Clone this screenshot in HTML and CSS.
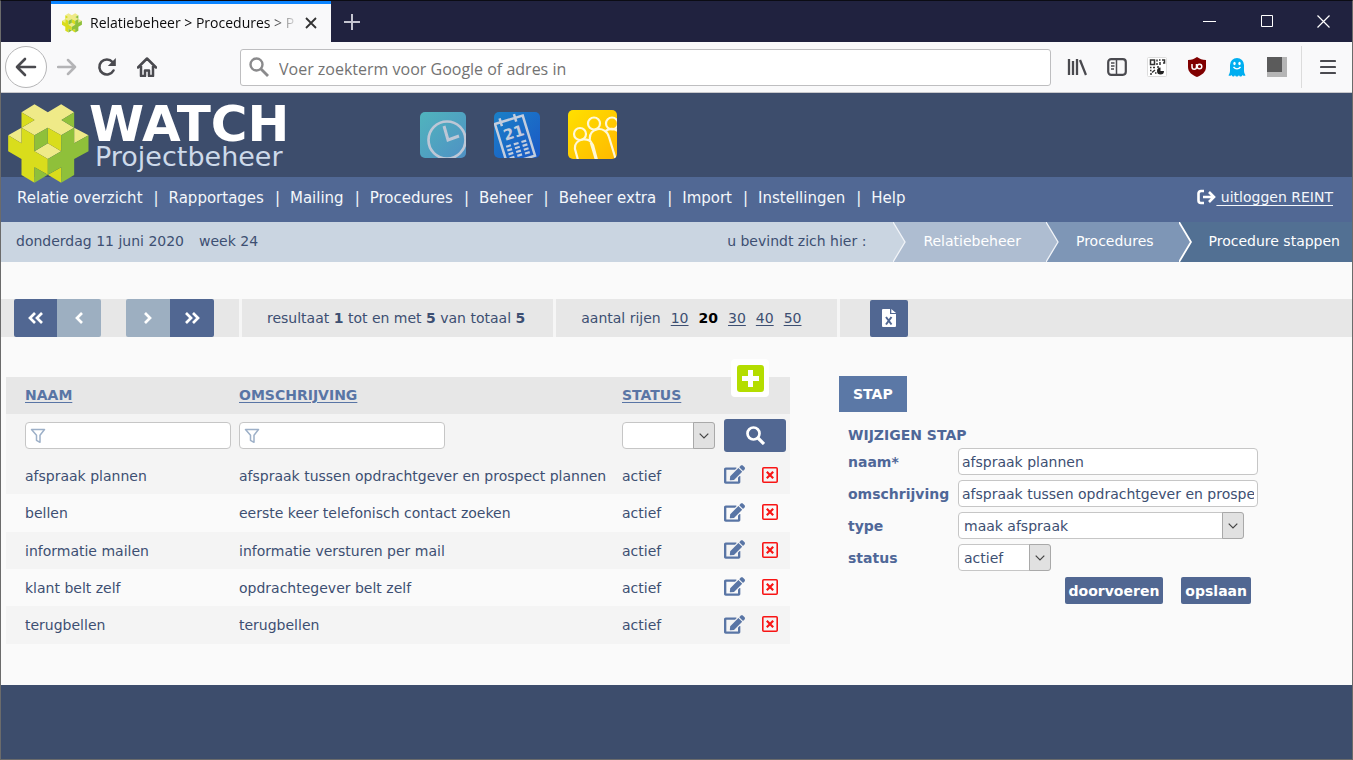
FILE: index.html
```html
<!DOCTYPE html>
<html lang="nl">
<head>
<meta charset="utf-8">
<title>Relatiebeheer &gt; Procedures &gt; Procedure stappen</title>
<link rel="stylesheet" href="styles.css">
</head>
<body>
<svg class="defs" aria-hidden="true">
  <symbol id="edit" viewBox="0 0 576 512"><path d="M402.6 83.2l90.2 90.2c3.8 3.8 3.8 10 0 13.8L274.4 405.6l-92.8 10.3c-12.4 1.4-22.9-9.1-21.5-21.5l10.3-92.8L388.8 83.2c3.8-3.8 10-3.8 13.8 0zm162-22.9l-48.8-48.8c-15.2-15.2-39.9-15.2-55.2 0l-35.4 35.4c-3.8 3.8-3.8 10 0 13.8l90.2 90.2c3.8 3.8 10 3.8 13.8 0l35.4-35.4c15.2-15.3 15.2-40 0-55.2zM384 346.2V448H64V128h229.8c3.2 0 6.2-1.3 8.5-3.5l40-40c7.6-7.6 2.2-20.5-8.5-20.5H48C21.5 64 0 85.5 0 112v352c0 26.5 21.5 48 48 48h352c26.5 0 48-21.5 48-48V306.2c0-10.7-12.9-16-20.5-8.5l-40 40c-2.2 2.3-3.5 5.3-3.5 8.5z" fill="#5975a5"/></symbol>
  <symbol id="remove" viewBox="0 0 16 16"><rect x=".8" y=".8" width="14.400" height="14.400" rx="1" fill="none" stroke="#f81515" stroke-width="1.600"/><path d="M4.800 4.800l6.400 6.400M11.200 4.800l-6.400 6.400" stroke="#f81515" stroke-width="2.200"/></symbol>
  <symbol id="funnel" viewBox="0 0 16 16"><path d="M1.5 1.5h13L10 7.3v7L6.500 12.300v-5z" fill="none" stroke="#9db0c8" stroke-width="1.500" stroke-linejoin="round"/></symbol>
  <symbol id="down" viewBox="0 0 10 6"><path d="M.7.7L5 5 9.300.7" fill="none" stroke="#444" stroke-width="1.200"/></symbol>
  <symbol id="logo" viewBox="24 32 242 240">
    <path d="M64 57l39-24 40 24 40-24 39 24-38 23 38 23-39 23-40-23-40 23-39-23 39-23zM24 126l40-23v47zM265 126l-43-23v47zM103 174l40-24 40 24-40 23z" fill="#efea88"/>
    <path d="M64 57l39 23-39 23zM24 126l40 24v-47l39 23v48l40 23v47l-40-22v46l-39-23v-48l-40-23zM143 103l40 23v48l-40-24zM143 244l40-22v46z" fill="#d9dd1c"/>
    <path d="M222 57l-38 23 38 23zM265 126l-43 24v-47l-39 23v48l-40 23v47l40-22v46l39-23v-48l43-23zM143 103l-40 23v48l40-24zM143 244l-40-22v46z" fill="#8fc03a"/>
  </symbol>
</svg>

<div class="tabs">
  <div class="tab">
    <svg width="20" height="20"><use href="#logo"/></svg>
    <span class="tab-title">Relatiebeheer &gt; Procedures &gt; P</span>
    <button class="plain" aria-label="Tabblad sluiten"><svg width="12" height="12" viewBox="0 0 12 12"><path d="M1 1l10 10M11 1L1 11" stroke="#333" stroke-width="1.800"/></svg></button>
  </div>
  <button class="plain new-tab" aria-label="Nieuw tabblad"><svg width="18" height="18" viewBox="0 0 18 18"><path d="M9 1v16M1 9h16" stroke="#c5c5d0" stroke-width="2"/></svg></button>
  <div class="window-buttons">
    <button class="plain" aria-label="Minimaliseren"><svg width="13" height="13" viewBox="0 0 13 13"><path d="M0 6.500h13" stroke="#fff"/></svg></button>
    <button class="plain" aria-label="Maximaliseren"><svg width="13" height="13" viewBox="0 0 13 13"><path d="M1.500.5h11v11h-11z" fill="none" stroke="#fff"/></svg></button>
    <button class="plain" aria-label="Sluiten"><svg width="13" height="13" viewBox="0 0 13 13"><path d="M.5.5l12 12M12.500.5l-12 12" stroke="#fff" stroke-width="1.200"/></svg></button>
  </div>
</div>

<div class="toolbar">
  <div class="nav-buttons">
    <button class="plain back" aria-label="Vorige"><svg width="22" height="20" viewBox="0 0 22 20"><path d="M20 10H2M10 2L2 10l8 8" fill="none" stroke="#4a4a4f" stroke-width="2.600" stroke-linecap="round" stroke-linejoin="round"/></svg></button>
    <button class="plain" aria-label="Volgende"><svg width="20" height="18" viewBox="0 0 20 18"><path d="M1 9h17M11 2l7 7-7 7" fill="none" stroke="#b4b4b6" stroke-width="2.500" stroke-linecap="round" stroke-linejoin="round"/></svg></button>
    <button class="plain" aria-label="Vernieuwen"><svg width="20" height="20" viewBox="0 0 20 20"><path d="M16.500 13.500A7.500 7.500 0 1 1 15.500 5" fill="none" stroke="#4a4a4f" stroke-width="2.600" stroke-linecap="round"/><path d="M18.800 1v8h-8z" fill="#4a4a4f"/></svg></button>
    <button class="plain" aria-label="Startpagina"><svg width="20" height="20" viewBox="0 0 20 20"><path d="M1 10.500L10 1.500l9 9M4 9v10h4v-5.500h4V19h4V9" fill="none" stroke="#4a4a4f" stroke-width="2.500" stroke-linecap="round" stroke-linejoin="round"/></svg></button>
  </div>
  <div class="address">
    <svg width="20" height="20" viewBox="0 0 20 20"><circle cx="7.500" cy="7.500" r="6" fill="none" stroke="#8a8a8c" stroke-width="2.400"/><path d="M12 12l7 7" stroke="#8a8a8c" stroke-width="2.800"/></svg>
    <input type="text" aria-label="Adres" placeholder="Voer zoekterm voor Google of adres in">
  </div>
  <div class="extensions">
    <button class="plain" aria-label="Bibliotheek"><svg width="20" height="18" viewBox="0 0 20 18"><path d="M2 1v16M6 3v14M10 1v16M13 2l6 15" stroke="#4a4a4f" stroke-width="2.300" fill="none"/></svg></button>
    <button class="plain" aria-label="Zijbalk"><svg width="20" height="18" viewBox="0 0 20 18"><rect x="1.200" y="1.200" width="17.600" height="15.600" rx="3" fill="none" stroke="#4a4a4f" stroke-width="2.200"/><path d="M9.500 1v16M4 5h3.500M4 8h3.500M4 11h3" stroke="#4a4a4f" stroke-width="1.500"/></svg></button>
    <button class="plain" aria-label="QR-code"><svg width="20" height="20" viewBox="0 0 20 20"><rect x=".5" y=".5" width="19" height="19" rx="1" fill="#fff" stroke="#ddd"/><path d="M3.500 3h4v4.500h-4zM10 2.500v2M10 6v2M12 3h1.500M13 5v3M15 3h2.500v3H16M3 10.500h1.500M6 10.500h2M10 10h2M3 13.500h1.500M3 17h2M5 15.500l3-2.500M8 16h1.500" fill="none" stroke="#333" stroke-width="1.500"/><path d="M13.500 10.500v3.500H17a3.500 3.500 0 1 1-3.500-3.500z" fill="#222"/></svg></button>
    <button class="plain" aria-label="uBlock Origin"><svg width="20" height="20" viewBox="0 0 20 20"><path d="M10 0c3 2 5 3 9 3v7c0 5-4 8-9 10-5-2-9-5-9-10V3c4 0 6-1 9-3z" fill="#800000"/><path d="M5 7v3a2.200 2.200 0 0 0 4.500 0V7" fill="none" stroke="#fff" stroke-width="1.500"/><circle cx="12.500" cy="9.500" r="2.300" fill="none" stroke="#fff" stroke-width="1.500"/></svg></button>
    <button class="plain" aria-label="Ghostery"><svg width="20" height="20" viewBox="0 0 20 20"><path d="M3 8a7 7 0 0 1 14 0v6c0 2 1 3 1.500 4.500-1 .5-2 .5-3-.5-1 2-3 2-3.500 0-1 2-3.500 2-4 0-1 2-2.500 2-3.500 0-1 1-2 1-3 .5C2 17 3 16 3 14z" fill="#00aef0"/><ellipse cx="7.500" cy="6.500" rx="1.200" ry="1.700" fill="#fff"/><ellipse cx="12.500" cy="6.500" rx="1.200" ry="1.700" fill="#fff"/><path d="M6.500 10c2 2.500 5 2.500 7 0" fill="none" stroke="#fff" stroke-width="1.400"/></svg></button>
    <button class="plain" aria-label="Extensie"><svg width="20" height="20" viewBox="0 0 20 20"><path d="M0 0h20v20H0z" fill="#b5b5b5"/><path d="M0 0h15v15H0z" fill="#5b5b5b"/></svg></button>
    <button class="plain menu" aria-label="Menu"><svg width="16" height="16" viewBox="0 0 16 16"><path d="M1 2h14M1 8h14M1 14h14" stroke="#4a4a4f" stroke-width="2.200" stroke-linecap="round"/></svg></button>
  </div>
</div>

<header class="banner">
  <svg class="logo" width="81" height="80"><use href="#logo"/></svg>
  <div class="brand"><strong>WATCH</strong><span>Projectbeheer</span></div>
  <div class="apps">
    <a href="#" aria-label="Tijd"><svg width="46" height="46" viewBox="0 0 46 46"><defs><linearGradient id="g1" x2="1" y2="1"><stop stop-color="#50b4bd"/><stop offset="1" stop-color="#4f91c4"/></linearGradient><clipPath id="c1"><rect width="46" height="46" rx="5"/></clipPath></defs><g clip-path="url(#c1)"><path d="M0 0h46v46H0z" fill="url(#g1)"/><g fill="none" stroke="#bdc7d6" stroke-width="2.700"><circle cx="27" cy="28" r="18.500"/><path d="M24 14l4 14 11-4" stroke-width="3"/></g></g></svg></a>
    <a href="#" aria-label="Agenda"><svg width="46" height="46" viewBox="0 0 46 46"><defs><linearGradient id="g2" x2="1" y2="1"><stop stop-color="#1a80c8"/><stop offset="1" stop-color="#1b58c5"/></linearGradient></defs><g clip-path="url(#c1)"><path d="M0 0h46v46H0z" fill="url(#g2)"/><g transform="translate(1 12) rotate(-17)" fill="none" stroke="#c3cddd" stroke-width="2.500"><path d="M0 0h29v42H0zM6-4v8M21-4v8"/><path d="M4 25h5m3 0h5m3 0h5M4 29h5m3 0h5m3 0h5M4 33h5m3 0h5m3 0h5M4 37h5m3 0h5m3 0h5" stroke-width="2.200"/><text x="5" y="19" class="day">21</text></g></g></svg></a>
    <a href="#" aria-label="Relaties"><svg width="49" height="49" viewBox="0 0 49 49"><defs><linearGradient id="g3" x2="1" y2="1"><stop stop-color="#ffe000"/><stop offset="1" stop-color="#ffb900"/></linearGradient><clipPath id="c3"><rect width="49" height="49" rx="5"/></clipPath></defs><g clip-path="url(#c3)"><path d="M0 0h49v49H0z" fill="url(#g3)"/><g fill="none" stroke="#fff8d8" stroke-width="2.200"><circle cx="12" cy="24" r="6"/><circle cx="26" cy="13.500" r="6"/><circle cx="44" cy="13.500" r="6"/><path d="M10 50L7 39c-1-11 15-13 18-4l4 15M28 50l-6-20c-2-13 16-15 19-3l7 23M37 22c3-4 9-4 13-1"/></g></g></svg></a>
  </div>
</header>

<nav class="main-nav">
  <ul>
    <li><a href="#">Relatie overzicht</a></li>
    <li><a href="#">Rapportages</a></li>
    <li><a href="#">Mailing</a></li>
    <li><a href="#">Procedures</a></li>
    <li><a href="#">Beheer</a></li>
    <li><a href="#">Beheer extra</a></li>
    <li><a href="#">Import</a></li>
    <li><a href="#">Instellingen</a></li>
    <li><a href="#">Help</a></li>
  </ul>
  <a class="logout" href="#"><svg width="19" height="16" viewBox="0 0 19 16"><path d="M7 2H4a2.500 2.500 0 0 0-2.500 2.500v7A2.500 2.500 0 0 0 4 14h3M6 8h11M12 3l5 5-5 5" fill="none" stroke="#fff" stroke-width="2.600"/></svg><span>&nbsp;uitloggen REINT</span></a>
</nav>

<div class="location">
  <span>donderdag 11 juni 2020</span><span>week 24</span>
  <span class="here">u bevindt zich hier :</span>
  <a class="crumb one" href="#"><svg width="13" height="40" viewBox="0 0 13 40"><path d="M0 0l12 20L0 40z" fill="#cad5e1"/><path d="M0 0l12 20L0 40" fill="none" stroke="#f1f4f8" stroke-width="1.300"/></svg>Relatiebeheer</a>
  <a class="crumb two" href="#"><svg width="13" height="40" viewBox="0 0 13 40"><path d="M0 0l12 20L0 40z" fill="#aebdd1"/><path d="M0 0l12 20L0 40" fill="none" stroke="#f1f4f8" stroke-width="1.300"/></svg>Procedures</a>
  <a class="crumb three" href="#"><svg width="13" height="40" viewBox="0 0 13 40"><path d="M0 0l12 20L0 40z" fill="#7e96b6"/><path d="M0 0l12 20L0 40" fill="none" stroke="#fff" stroke-width="1.800"/></svg>Procedure stappen</a>
</div>

<main>
  <div class="pager">
    <div class="segment steps">
      <button class="step first" aria-label="Eerste"><svg width="16" height="12" viewBox="0 0 16 12"><path d="M7 1L2 6l5 5M14 1L9 6l5 5"/></svg></button>
      <button class="step previous" disabled aria-label="Vorige pagina"><svg width="16" height="12" viewBox="0 0 16 12"><path d="M11 1L6 6l5 5"/></svg></button>
      <button class="step next" disabled aria-label="Volgende pagina"><svg width="16" height="12" viewBox="0 0 16 12"><path d="M5 1l5 5-5 5"/></svg></button>
      <button class="step last" aria-label="Laatste"><svg width="16" height="12" viewBox="0 0 16 12"><path d="M2 1l5 5-5 5M9 1l5 5-5 5"/></svg></button>
    </div>
    <div class="segment result"><p>resultaat <b>1</b> tot en met <b>5</b> van totaal <b>5</b></p></div>
    <div class="segment rows"><span>aantal rijen</span><a href="#">10</a><b class="current">20</b><a href="#">30</a><a href="#">40</a><a href="#">50</a></div>
    <div class="segment export"><button class="excel" aria-label="Exporteren naar Excel"><svg width="14" height="18" viewBox="0 0 14 18"><path d="M1 0h7v5h6v12a1 1 0 0 1-1 1H1a1 1 0 0 1-1-1V1a1 1 0 0 1 1-1zM9.300 0L14 4H9.300z" fill="#fff"/><path d="M4 8l5.500 7.500M9.500 8L4 15.500" stroke="#516792" stroke-width="2"/></svg></button></div>
  </div>

  <div class="columns">
    <section class="list">
      <button class="add" aria-label="Toevoegen"><svg width="27" height="27" viewBox="0 0 27 27"><rect width="27" height="27" rx="3" fill="#b4dd00"/><path d="M13.500 5v17M5 13.500h17" stroke="#fff" stroke-width="5"/></svg></button>
      <table>
        <colgroup><col class="c-name"><col class="c-text"><col class="c-status"><col class="c-tools"></colgroup>
        <thead>
          <tr><th><a href="#">NAAM</a></th><th><a href="#">OMSCHRIJVING</a></th><th><a href="#">STATUS</a></th><th></th></tr>
        </thead>
        <tbody>
          <tr class="filters">
            <td><div class="filter"><svg width="16" height="16"><use href="#funnel"/></svg><input type="text" aria-label="Filter naam"></div></td>
            <td><div class="filter"><svg width="16" height="16"><use href="#funnel"/></svg><input type="text" aria-label="Filter omschrijving"></div></td>
            <td><div class="select small"><select aria-label="Filter status"><option></option><option>actief</option></select><span><svg width="10" height="6"><use href="#down"/></svg></span></div></td>
            <td><button class="search" aria-label="Zoeken"><svg width="19" height="19" viewBox="0 0 19 19"><circle cx="7.500" cy="7.500" r="6" fill="none" stroke="#fff" stroke-width="2.700"/><path d="M12 12l6 6" stroke="#fff" stroke-width="3.200"/></svg></button></td>
          </tr>
          <tr><td>afspraak plannen</td><td>afspraak tussen opdrachtgever en prospect plannen</td><td>actief</td><td><div class="tools"><button class="plain" aria-label="Wijzigen"><svg width="21" height="19"><use href="#edit"/></svg></button><button class="plain" aria-label="Verwijderen"><svg width="16" height="16"><use href="#remove"/></svg></button></div></td></tr>
          <tr><td>bellen</td><td>eerste keer telefonisch contact zoeken</td><td>actief</td><td><div class="tools"><button class="plain" aria-label="Wijzigen"><svg width="21" height="19"><use href="#edit"/></svg></button><button class="plain" aria-label="Verwijderen"><svg width="16" height="16"><use href="#remove"/></svg></button></div></td></tr>
          <tr><td>informatie mailen</td><td>informatie versturen per mail</td><td>actief</td><td><div class="tools"><button class="plain" aria-label="Wijzigen"><svg width="21" height="19"><use href="#edit"/></svg></button><button class="plain" aria-label="Verwijderen"><svg width="16" height="16"><use href="#remove"/></svg></button></div></td></tr>
          <tr><td>klant belt zelf</td><td>opdrachtegever belt zelf</td><td>actief</td><td><div class="tools"><button class="plain" aria-label="Wijzigen"><svg width="21" height="19"><use href="#edit"/></svg></button><button class="plain" aria-label="Verwijderen"><svg width="16" height="16"><use href="#remove"/></svg></button></div></td></tr>
          <tr><td>terugbellen</td><td>terugbellen</td><td>actief</td><td><div class="tools"><button class="plain" aria-label="Wijzigen"><svg width="21" height="19"><use href="#edit"/></svg></button><button class="plain" aria-label="Verwijderen"><svg width="16" height="16"><use href="#remove"/></svg></button></div></td></tr>
        </tbody>
      </table>
    </section>

    <section class="detail">
      <button class="step-tab">STAP</button>
      <form>
        <h2>WIJZIGEN STAP</h2>
        <div class="fields">
          <label for="naam">naam*</label><input id="naam" type="text" value="afspraak plannen">
          <label for="omschrijving">omschrijving</label><input id="omschrijving" type="text" value="afspraak tussen opdrachtgever en prospect plannen">
          <label for="type">type</label><div class="select wide"><select id="type"><option>maak afspraak</option></select><span><svg width="10" height="6"><use href="#down"/></svg></span></div>
          <label for="status">status</label><div class="select small"><select id="status"><option>actief</option></select><span><svg width="10" height="6"><use href="#down"/></svg></span></div>
        </div>
        <div class="actions"><button type="button">doorvoeren</button><button type="button">opslaan</button></div>
      </form>
    </section>
  </div>
</main>
<footer></footer>
</body>
</html>
```

FILE: styles.css
```css
* { box-sizing: border-box; }
body {
  margin: 0;
  min-height: 100vh;
  display: flex;
  flex-direction: column;
  border: 1px solid #6b6b6b;
  border-top-color: #0b0c14;
  background: #fafafa;
  color: #3d4f72;
  font: 14px/20px "DejaVu Sans", sans-serif;
}
svg { display: block; flex: none; }
.defs { position: absolute; width: 0; height: 0; }
a { color: inherit; }
button, input, select { font: inherit; color: inherit; }
button { border: 0; padding: 0; }
.plain { display: flex; align-items: center; justify-content: center; background: none; }

/* browser chrome */
.tabs { display: flex; height: 41px; background: #20223f; padding-left: 50px; }
.tab {
  display: flex;
  align-items: center;
  width: 280px;
  padding: 0 14px 0 11px;
  background: #f9f9fa;
  border-top: 3px solid #0a84ff;
  color: #0c0c0d;
  font: 14px/20px "Open Sans", sans-serif;
}
.tab-title {
  flex: 1;
  margin: 0 6px 0 8px;
  overflow: hidden;
  white-space: nowrap;
  -webkit-mask-image: linear-gradient(to right, #000 85%, transparent);
  mask-image: linear-gradient(to right, #000 85%, transparent);
}
.new-tab { padding: 0 12px; }
.window-buttons { display: flex; gap: 44px; margin-left: auto; padding-right: 22px; }
.toolbar {
  display: flex;
  align-items: center;
  height: 51px;
  border-bottom: 1px solid #c8c8cc;
  background: #f9f9fa;
}
.nav-buttons { display: flex; align-items: center; gap: 20px; width: 239px; padding-left: 4px; }
.back { width: 42px; height: 42px; margin-right: -10px; border: 1px solid #b5b5b7; border-radius: 50%; background: #fff; }
.address {
  display: flex;
  align-items: center;
  flex: 1;
  height: 37px;
  gap: 10px;
  padding: 0 8px;
  background: #fff;
  border: 1px solid #bebec0;
  border-radius: 3px;
}
.address input { flex: 1; min-width: 0; padding: 3px 0 0; border: 0; outline: 0; background: none; font: 16px/24px "Open Sans", sans-serif; }
.address input::placeholder { color: #737373; }
.extensions { display: flex; align-items: center; gap: 20px; padding: 0 16px; }
.menu { height: 42px; margin-left: -6px; padding-left: 18px; border-left: 1px solid #dcdcdc; }

/* application header */
.banner { display: flex; height: 84px; padding: 11px 7px 0; background: #3d4d6c; }
.logo { position: relative; z-index: 1; }
.brand { display: flex; flex-direction: column; width: 204px; color: #fff; }
.brand strong { font-size: 50px; line-height: 40px; }
.brand span { padding-left: 6px; color: #cedaea; font-size: 27px; line-height: 25px; }
.apps { display: flex; align-items: center; align-self: flex-start; gap: 28px; margin-left: 127px; padding-top: 6px; }
.day { font-size: 15px; font-weight: bold; fill: #c3cddd; stroke: none; }
.main-nav { display: flex; justify-content: space-between; height: 45px; padding: 10px 19px 0 16px; background: #516894; color: #f4f7fb; font-size: 15px; line-height: 22px; }
.main-nav ul { display: flex; margin: 0; padding: 0; list-style: none; }
.main-nav li + li::before { content: "|"; padding: 0 10px 0 11px; }
.main-nav li a { text-decoration: none; }
.logout { display: flex; align-items: center; align-self: flex-start; font-size: 14px; line-height: 20px; text-decoration: none; }
.logout span { text-decoration: underline; text-underline-offset: 3px; }
.location { display: flex; align-items: center; gap: 15px; height: 40px; padding-left: 15px; background: #cad5e1; line-height: 38px; }
.location > span { padding-bottom: 2px; }
.here { margin-left: auto; margin-right: 12px; }
.crumb { display: flex; gap: 17px; padding-right: 25px; color: #fff; text-decoration: none; }
.crumb + .crumb { margin-left: -15px; }
.one { background: #aebdd1; }
.two { background: #7e96b6; }
.three { background: #527093; padding-right: 12px; }

/* paging bar */
.pager { display: flex; height: 38px; margin-top: 37px; background: #e7e7e7; }
.segment { display: flex; align-items: center; padding: 0 25px; border-right: 3px solid #f6f6f6; line-height: 38px; }
.segment p { margin: 0; }
.steps { padding-left: 13px; }
.result { padding-right: 28px; }
.step { display: flex; align-items: center; justify-content: center; width: 44px; height: 38px; background: #516792; }
.step:disabled { background: #9dafc1; }
.step path { fill: none; stroke: #fff; stroke-width: 2.7; }
.first, .next { border-radius: 2px 0 0 2px; }
.previous, .last { border-radius: 0 2px 2px 0; }
.step.first { width: 43px; }
.next { margin-left: 25px; }
.rows { gap: 10px; padding-right: 35px; }
.rows a { text-underline-offset: 2px; }
.current { color: #000; }
.export { padding-left: 30px; border: 0; }
.excel { display: flex; align-items: center; justify-content: center; width: 38px; height: 37px; border-radius: 2px; background: #516792; }

/* list */
.columns { display: flex; align-items: flex-start; gap: 49px; padding: 39px 5px 41px; }
.list { position: relative; flex: 0 1 784px; padding-top: 1px; }
.add { position: absolute; top: -17px; right: 21px; display: flex; align-items: center; justify-content: center; width: 38px; height: 38px; border-radius: 4px; background: #fff; }
table { width: 100%; table-layout: fixed; border-collapse: collapse; }
.c-name { width: 233px; }
.c-status { width: 102px; }
.c-tools { width: 66px; }
th, td { padding: 0; text-align: left; white-space: nowrap; }
th { padding-bottom: 2px; }
th:first-child, td:first-child { padding-left: 19px; }
thead tr { height: 37px; background: #e7e7e7; color: #5975a5; }
th a { text-underline-offset: 2px; }
tbody tr { height: 37px; }
tbody tr:nth-child(3), tbody tr:last-child { height: 38px; }
tbody tr:nth-child(even), .filters { background: #f4f4f4; }
tbody tr.filters { height: 43px; }
.filter { position: relative; width: 206px; }
.filter svg { position: absolute; left: 5px; top: 6px; }
.filter input { padding-left: 24px; }
.filter input, .fields input, select {
  display: block;
  width: 100%;
  height: 27px;
  padding: 0 3px;
  border: 1px solid #c6c6c6;
  border-radius: 4px;
  outline: 0;
  background: #fff;
}
.search { display: flex; align-items: center; justify-content: center; width: 62px; height: 33px; border-radius: 3px; background: #516792; }
.tools { display: flex; align-items: center; gap: 17px; padding-bottom: 2px; }
.select { position: relative; }
.select select { appearance: none; padding: 0 24px 0 5px; }
.select span { position: absolute; top: 0; right: 0; display: flex; align-items: center; justify-content: center; width: 22px; height: 27px; border: 1px solid #a9a9a9; border-radius: 0 3px 3px 0; background: #e1e1e1; pointer-events: none; }
.small { width: 93px; }
.wide { width: 286px; }

/* detail form */
.detail { flex: 0 1 420px; }
.step-tab { height: 36px; padding: 0 14px; background: #5b78a6; color: #fff; font-weight: bold; }
form { padding: 13px 0 0 9px; color: #4f6798; }
h2 { margin: 0 0 3px; font-size: 14px; line-height: 20px; }
.fields { display: grid; grid-template-columns: 110px 300px; align-items: center; row-gap: 5px; }
.fields label { font-weight: bold; }
.fields input, .fields select { color: #3d4f72; }
.actions { display: flex; justify-content: flex-end; gap: 18px; width: 403px; margin-top: 6px; }
.actions button { height: 27px; padding: 0 4px; border-radius: 2px; background: #516792; color: #fff; font-weight: bold; }
footer { flex: 1; background: #3d4d6c; }
```
